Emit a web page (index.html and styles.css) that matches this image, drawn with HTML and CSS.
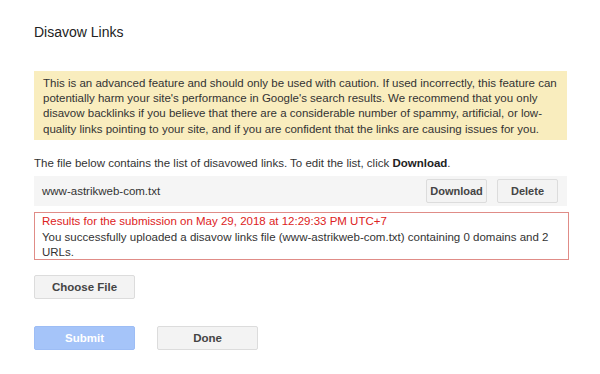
FILE: index.html
```html
<!DOCTYPE html>
<html lang="en">
<head>
    <meta charset="UTF-8">
    <title>Disavow Links</title>
    <link rel="stylesheet" href="styles.css">
</head>
<body>
    <div class="page">
        <h1 class="title">Disavow Links</h1>

        <div class="warning">
            This is an advanced feature and should only be used with caution. If used incorrectly, this feature can potentially harm your site's performance in Google's search results. We recommend that you only disavow backlinks if you believe that there are a considerable number of spammy, artificial, or low-quality links pointing to your site, and if you are confident that the links are causing issues for you.
        </div>

        <p class="intro">The file below contains the list of disavowed links. To edit the list, click <b>Download</b>.</p>

        <div class="file-row">
            <span class="file-name">www-astrikweb-com.txt</span>
            <div class="file-actions">
                <button class="btn btn-small">Download</button>
                <button class="btn btn-small">Delete</button>
            </div>
        </div>

        <div class="result">
            <div class="result-title">Results for the submission on May 29, 2018 at 12:29:33 PM UTC+7</div>
            <div class="result-text">You successfully uploaded a disavow links file (www-astrikweb-com.txt) containing 0 domains and 2 URLs.</div>
        </div>

        <button class="btn btn-wide choose">Choose File</button>

        <div class="actions">
            <button class="btn btn-wide btn-blue" disabled>Submit</button>
            <button class="btn btn-wide">Done</button>
        </div>
    </div>
</body>
</html>
```

FILE: styles.css
```css
* {
    margin: 0;
    padding: 0;
    box-sizing: border-box;
}
body {
    font-family: 'Liberation Sans', Arial, sans-serif;
    background-color: #fff;
    color: #333;
}
.page {
    padding: 24px 0 0 34px;
    width: 569px;
}
.title {
    font-size: 14px;
    font-weight: normal;
    color: #222;
    line-height: 17px;
    margin-bottom: 30px;
}
.warning {
    width: 533px;
    background-color: #f9edbe;
    color: #333;
    font-size: 11.5px;
    line-height: 15.2px;
    padding: 5px 9px 3px 9px;
}
.intro {
    font-size: 11.5px;
    line-height: 15px;
    margin-top: 16px;
    margin-bottom: 5px;
    color: #333;
}
.intro b {
    color: #222;
}
.file-row {
    width: 533px;
    height: 30px;
    background-color: #f5f5f5;
    display: flex;
    align-items: center;
    justify-content: space-between;
    padding: 0 9px 0 8px;
    font-size: 11.5px;
}
.file-actions {
    display: flex;
    gap: 10px;
}
.btn {
    font-family: 'Liberation Sans', Arial, sans-serif;
    background-color: #f3f3f3;
    border: 1px solid #dcdcdc;
    border-radius: 2px;
    color: #444;
    font-weight: bold;
    font-size: 11px;
    cursor: pointer;
}
.btn-small {
    width: 61px;
    height: 24px;
}
.btn-wide {
    width: 101px;
    height: 24px;
    font-size: 11.5px;
}
.result {
    width: 535px;
    margin-top: 6px;
    border: 1px solid #e08c87;
    padding: 1px 7px 0 7px;
    font-size: 11.5px;
    line-height: 14.5px;
}
.result-title {
    color: #dd2222;
    margin-bottom: 2px;
}
.result-text {
    color: #333;
}
.choose {
    display: block;
    margin-top: 15px;
}
.actions {
    display: flex;
    gap: 22px;
    margin-top: 27px;
}
.btn-blue {
    background-color: #a5c4f9;
    border-color: #9dbdf5;
    color: #fff;
}
```
